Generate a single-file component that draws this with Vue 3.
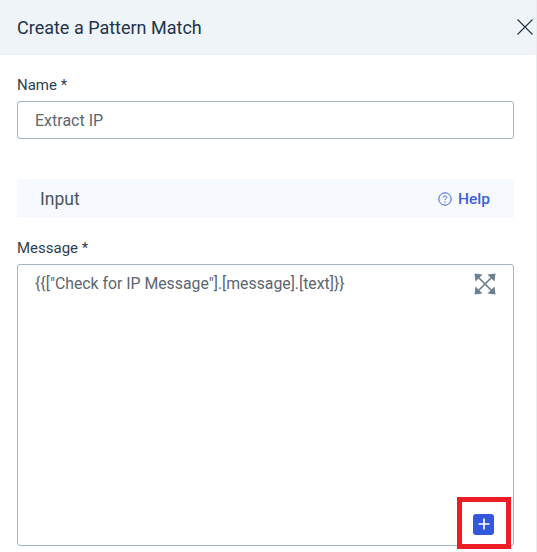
<script setup>
const name = 'Extract IP'
const message = '{{["Check for IP Message"].[message].[text]}}'
</script>

<template>
  <div class="panel">
    <header class="head">
      <h1>Create a Pattern Match</h1>
      <svg class="close" width="16" height="16" viewBox="0 0 16 16">
        <path d="M0.5 0.5L15.5 15.5M15.5 0.5L0.5 15.5" stroke="#1f3349" stroke-width="1.1" fill="none" />
      </svg>
    </header>

    <div class="body">
      <label class="label name-label">Name *</label>
      <div class="input">{{ name }}</div>

      <div class="section">
        <span class="section-title">Input</span>
        <a class="help">
          <svg width="14" height="14" viewBox="0 0 14 14" fill="none">
            <circle cx="7" cy="7" r="6.2" stroke="#3d5fe0" stroke-width="1" />
            <path d="M5.3 5.6C5.3 4.6 6 4 7 4s1.7 .6 1.7 1.5C8.700 6.700 7 6.700 7 8.100" stroke="#3d5fe0" stroke-width="1" />
            <circle cx="7" cy="10" r=".65" fill="#3d5fe0" />
          </svg>
          Help
        </a>
      </div>

      <label class="label message-label">Message *</label>
      <div class="textarea">
        <div class="text">{{ message }}</div>
        <svg class="expand" width="22" height="22" viewBox="0 0 22 22" fill="none">
          <path d="M4 4L18 18M18 4L4 18" stroke="#6c8090" stroke-width="1.7" />
          <path d="M0.500 0.500L8.500 1.500L1.500 8.500ZM21.500 0.500L20.500 8.500L13.500 1.500ZM0.500 21.500L1.500 13.500L8.500 20.500ZM21.500 21.500L13.500 20.500L20.500 13.500Z" fill="#6c8090" />
        </svg>
        <div class="add-mark">
          <button class="add" type="button">
            <svg width="12" height="12" viewBox="0 0 12 12">
              <path d="M6 .5V11.500M.5 6H11.500" stroke="#fff" stroke-width="1.700" />
            </svg>
          </button>
        </div>
      </div>
    </div>
  </div>
</template>

<style scoped>
.panel {
  width: 536px;
  height: 552px;
  overflow: hidden;
  background: #fff;
  border-right: 1px solid #e9ebee;
  box-sizing: content-box;
  font-family: Roboto, "Liberation Sans", sans-serif;
}

.head {
  height: 55px;
  background: #eff4f9;
  display: flex;
  align-items: center;
  justify-content: space-between;
  padding: 0 3px 0 17px;
}
.head h1 {
  margin: 0;
  font-size: 18px;
  font-weight: 400;
  color: #1f3349;
}
.close {
  margin-top: -1px;
}

.body {
  padding: 0 22px 0 17px;
}

.label {
  display: block;
  font-size: 15px;
  line-height: 18px;
  font-weight: 400;
  color: #2f3e4d;
}
.name-label {
  margin-top: 21px;
  margin-bottom: 7px;
}

.input {
  box-sizing: border-box;
  height: 38px;
  border: 1px solid #a3b3bf;
  border-radius: 3px;
  padding: 0 17px;
  line-height: 38px;
  font-size: 16px;
  color: #5b6670;
}

.section {
  height: 39px;
  margin-top: 40px;
  background: #f6f9fd;
  display: flex;
  align-items: center;
  justify-content: space-between;
  padding: 0 24px 0 23px;
}
.section-title {
  font-size: 17.5px;
  color: #4a5560;
}
.help {
  display: flex;
  align-items: center;
  gap: 6px;
  font-size: 15.5px;
  font-weight: 500;
  color: #3d5fe0;
}

.message-label {
  margin-top: 21px;
  margin-bottom: 7px;
}

.textarea {
  box-sizing: border-box;
  position: relative;
  height: 282px;
  border: 1px solid #a3b3bf;
  border-radius: 3px;
  padding: 10px 17px;
}
.text {
  font-size: 15.8px;
  line-height: 18px;
  color: #5b6670;
}
.expand {
  position: absolute;
  top: 8px;
  right: 17px;
}
.add-mark {
  position: absolute;
  box-sizing: border-box;
  left: 439px;
  top: 232px;
  width: 54px;
  height: 52px;
  border: 5px solid #ee1c25;
  display: flex;
  align-items: center;
  justify-content: center;
}
.add {
  width: 21px;
  height: 21px;
  margin: 2px 1px 0 0;
  padding: 0;
  border: none;
  border-radius: 3px;
  background: #3358de;
  display: flex;
  align-items: center;
  justify-content: center;
}
</style>
